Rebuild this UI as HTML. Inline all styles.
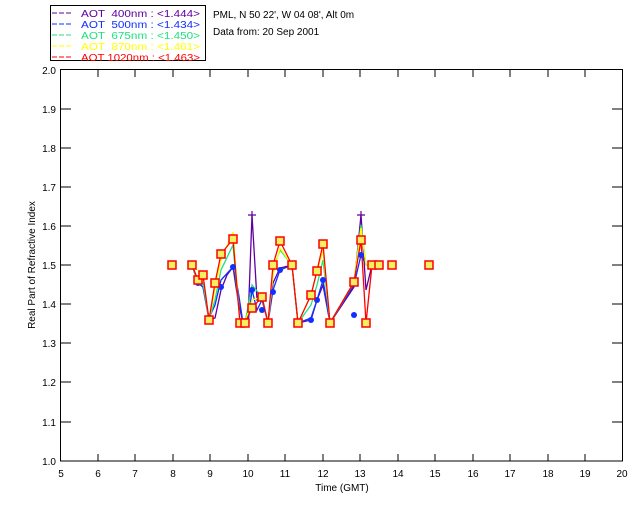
<!DOCTYPE html>
<html><head><style>
body{margin:0;background:#fff;}
svg{display:block;font-family:"Liberation Sans","DejaVu Sans",sans-serif;}
</style></head><body>
<svg width="640" height="512" xmlns="http://www.w3.org/2000/svg">
<rect x="0" y="0" width="640" height="512" fill="#fff"/>
<rect x="50.5" y="5.5" width="155" height="55" fill="none" stroke="#000"/>
<g font-size="10" stroke-width="1">
<line x1="52" y1="13" x2="72" y2="13" stroke="#6000a0" stroke-dasharray="5,2"/>
<text x="81" y="17" fill="#6000a0" textLength="119" lengthAdjust="spacingAndGlyphs" xml:space="preserve">AOT  400nm : &lt;1.444&gt;</text>
<line x1="52" y1="24" x2="72" y2="24" stroke="#1030ff" stroke-dasharray="5,2"/>
<text x="81" y="28" fill="#1030ff" textLength="119" lengthAdjust="spacingAndGlyphs" xml:space="preserve">AOT  500nm : &lt;1.434&gt;</text>
<line x1="52" y1="35" x2="72" y2="35" stroke="#20e080" stroke-dasharray="5,2"/>
<text x="81" y="39" fill="#20e080" textLength="119" lengthAdjust="spacingAndGlyphs" xml:space="preserve">AOT  675nm : &lt;1.450&gt;</text>
<line x1="52" y1="46" x2="72" y2="46" stroke="#ffff00" stroke-dasharray="5,2"/>
<text x="81" y="50" fill="#ffff00" textLength="119" lengthAdjust="spacingAndGlyphs" xml:space="preserve">AOT  870nm : &lt;1.461&gt;</text>
<line x1="52" y1="57" x2="72" y2="57" stroke="#ff0000" stroke-dasharray="5,2"/>
<text x="81" y="61" fill="#ff0000" textLength="119" lengthAdjust="spacingAndGlyphs" xml:space="preserve">AOT 1020nm : &lt;1.463&gt;</text>
</g>
<text x="213" y="18" font-size="10">PML, N 50 22', W 04 08', Alt 0m</text>
<text x="213" y="35" font-size="10">Data from: 20 Sep 2001</text>
<rect x="60.5" y="69.5" width="562" height="391.5" fill="none" stroke="#000"/>
<g stroke="#000">
<path d="M98 461v-7M135 461v-7M173 461v-7M210 461v-7M248 461v-7M285 461v-7M323 461v-7M360 461v-7M398 461v-7M435 461v-7M473 461v-7M510 461v-7M548 461v-7M585 461v-7
M98 70v7M135 70v7M173 70v7M210 70v7M248 70v7M285 70v7M323 70v7M360 70v7M398 70v7M435 70v7M473 70v7M510 70v7M548 70v7M585 70v7
M61 109h10M61 148h10M61 187h10M61 226h10M61 265h10M61 304h10M61 343h10M61 382h10M61 422h10
M622 109h-10M622 148h-10M622 187h-10M622 226h-10M622 265h-10M622 304h-10M622 343h-10M622 382h-10M622 422h-10"/>
</g>
<g font-size="10" text-anchor="end">
<text x="56" y="465">1.0</text><text x="56" y="426">1.1</text><text x="56" y="386">1.2</text><text x="56" y="347">1.3</text><text x="56" y="308">1.4</text><text x="56" y="269">1.5</text><text x="56" y="230">1.6</text><text x="56" y="191">1.7</text><text x="56" y="152">1.8</text><text x="56" y="113">1.9</text><text x="56" y="74">2.0</text>
</g>
<g font-size="10" text-anchor="middle">
<text x="61" y="477">5</text><text x="98" y="477">6</text><text x="135" y="477">7</text><text x="173" y="477">8</text><text x="210" y="477">9</text><text x="248" y="477">10</text><text x="285" y="477">11</text><text x="323" y="477">12</text><text x="360" y="477">13</text><text x="398" y="477">14</text><text x="435" y="477">15</text><text x="473" y="477">16</text><text x="510" y="477">17</text><text x="548" y="477">18</text><text x="585" y="477">19</text><text x="622" y="477">20</text>
<text x="342" y="491">Time (GMT)</text>
</g>
<text font-size="10" text-anchor="middle" transform="translate(35,265) rotate(-90)">Real Part of Refractive Index</text>
<g fill="none" stroke-width="1.3">
<polyline stroke="#6000a0" points="192,265 198,283 203,287 209,320 215,318 221,290 227,275 233,267 238,300 243,323 248,323 252,215 257,300 262,297 268,323 273,283 280,268 292,265 298,323 311,320 317,300 323,285 330,323 354,287 361,215 366,290 372,265"/>
<polyline stroke="#1030ff" points="192,265 198,283 203,287 209,318 215,305 221,280 233,267 238,290 243,323 248,323 252,290 257,310 262,300 268,323 273,290 280,270 292,265 298,323 311,318 317,300 323,280 330,323 354,285 361,255 366,265 372,265"/>
<polyline stroke="#20e080" points="192,265 198,283 203,283 209,320 215,300 221,270 233,245 240,323 245,323 252,285 262,297 268,323 273,270 280,250 292,265 298,323 311,305 317,285 323,260 330,323 354,282 361,225 366,265 372,265"/>
<polyline stroke="#ffff00" points="192,265 203,275 209,320 215,290 221,260 233,232 240,323 245,323 252,300 262,297 268,323 273,275 280,248 292,265 298,323 311,295 317,272 323,250 330,323 354,282 361,228 366,265 372,265"/>
<polyline stroke="#ff0000" points="192,265 198,280 203,275 209,320 215,283 221,254 233,239 240,323 245,323 252,308 262,297 268,323 273,265 280,241 292,265 298,323 311,295 317,271 323,244 330,323 354,282 361,240 366,323 372,265"/>
</g>
<g stroke="#6000a0" stroke-width="1.2"><path d="M252 211v8M248 215h8M361 211v8M357 215h8"/></g>
<g fill="#1030ff"><circle cx="198" cy="283" r="3"/><circle cx="209" cy="318" r="3"/><circle cx="221" cy="287" r="3"/><circle cx="233" cy="267" r="3"/><circle cx="252" cy="290" r="3"/><circle cx="262" cy="310" r="3"/><circle cx="273" cy="292" r="3"/><circle cx="280" cy="270" r="3"/><circle cx="311" cy="320" r="3"/><circle cx="323" cy="280" r="3"/><circle cx="354" cy="315" r="3"/><circle cx="361" cy="255" r="3"/><circle cx="317" cy="300" r="3"/></g>
<g stroke="#ff0000" stroke-width="1.5" fill="#f4f060">
<rect x="168" y="261" width="8" height="8"/><rect x="188" y="261" width="8" height="8"/><rect x="194" y="276" width="8" height="8"/><rect x="199" y="271" width="8" height="8"/><rect x="205" y="316" width="8" height="8"/><rect x="211" y="279" width="8" height="8"/><rect x="217" y="250" width="8" height="8"/><rect x="229" y="235" width="8" height="8"/><rect x="236" y="319" width="8" height="8"/><rect x="241" y="319" width="8" height="8"/><rect x="248" y="304" width="8" height="8"/><rect x="258" y="293" width="8" height="8"/><rect x="264" y="319" width="8" height="8"/><rect x="269" y="261" width="8" height="8"/><rect x="276" y="237" width="8" height="8"/><rect x="288" y="261" width="8" height="8"/><rect x="294" y="319" width="8" height="8"/><rect x="307" y="291" width="8" height="8"/><rect x="313" y="267" width="8" height="8"/><rect x="319" y="240" width="8" height="8"/><rect x="326" y="319" width="8" height="8"/><rect x="350" y="278" width="8" height="8"/><rect x="357" y="236" width="8" height="8"/><rect x="362" y="319" width="8" height="8"/><rect x="368" y="261" width="8" height="8"/><rect x="375" y="261" width="8" height="8"/><rect x="388" y="261" width="8" height="8"/><rect x="425" y="261" width="8" height="8"/>
</g>
</svg>
</body></html>
